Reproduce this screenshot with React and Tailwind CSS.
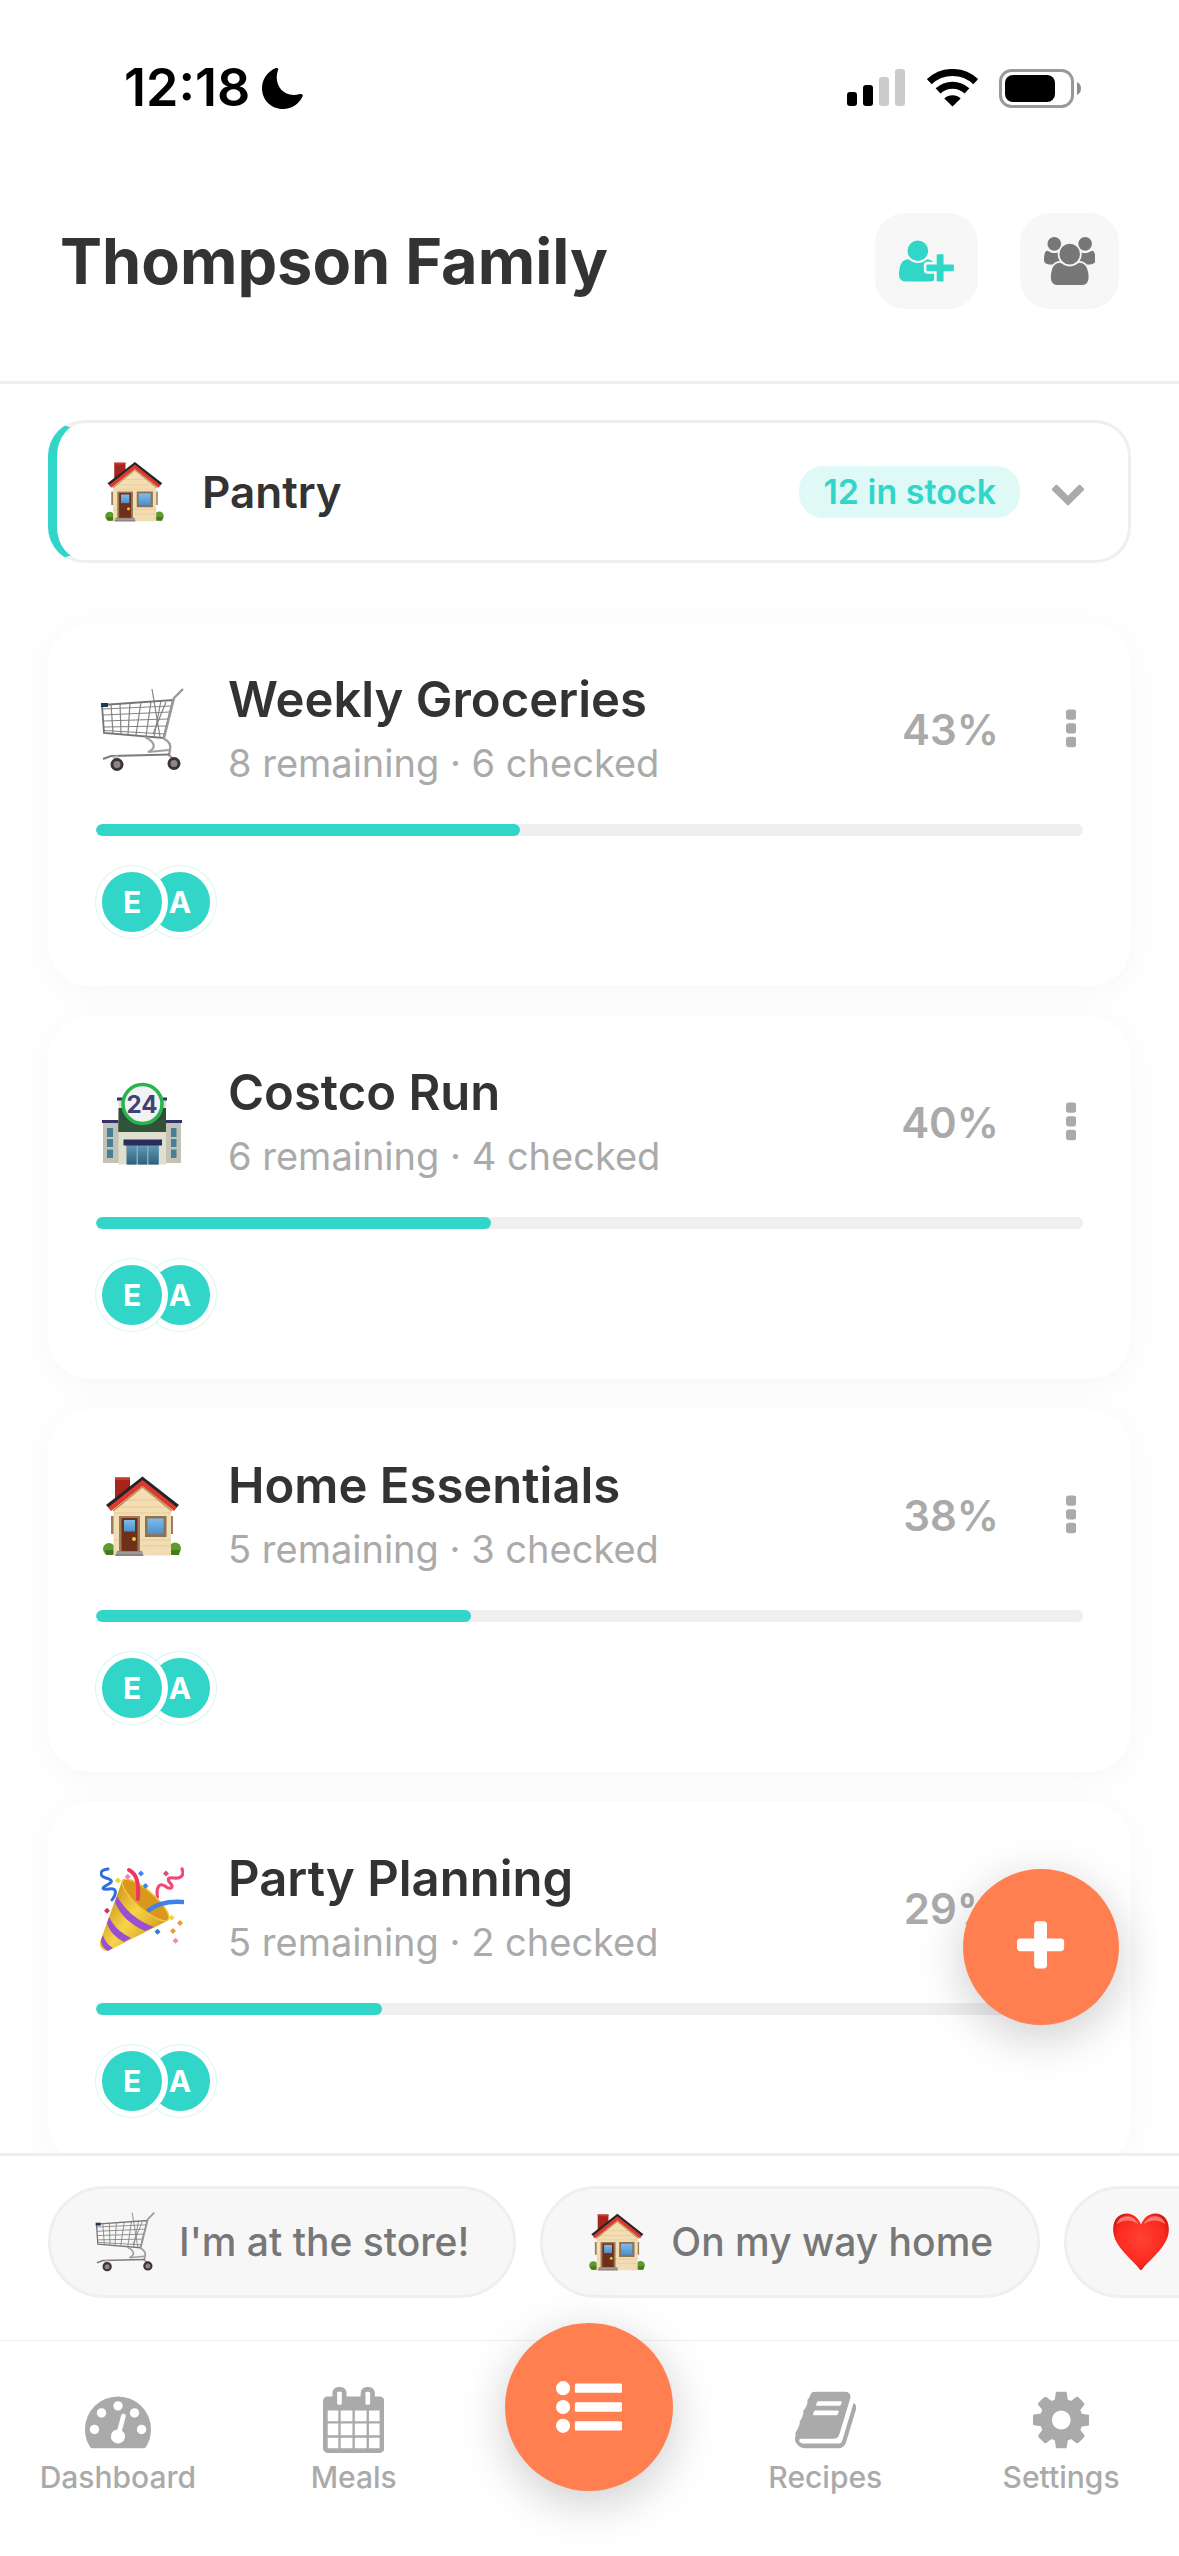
import React from "react";

const GLYPHS = {
  userPlus: {
    width: 2048,
    d: "M704 640q-159 0 -271.5 112.5t-112.5 271.5t112.5 271.5t271.5 112.5t271.5 -112.5t112.5 -271.5t-112.5 -271.5t-271.5 -112.5zM1664 512h352q13 0 22.5 -9.5t9.5 -22.5v-192q0 -13 -9.5 -22.5t-22.5 -9.5h-352v-352q0 -13 -9.5 -22.5t-22.5 -9.5h-192q-13 0 -22.5 9.5t-9.5 22.5v352h-352q-13 0 -22.5 9.5t-9.5 22.5v192q0 13 9.5 22.5t22.5 9.5h352v352q0 13 9.5 22.5t22.5 9.5h192q13 0 22.5 -9.5t9.5 -22.5v-352zM928 288q0 -52 38 -90t90 -38h256v-238q-68 -50 -171 -50h-874q-121 0 -194 69t-73 190q0 53 3.5 103.5t14 109t26.5 108.5t43 97.5t62 81t85.5 53.5t111.5 20q19 0 39 -17q79 -61 154.5 -91.5t164.5 -30.5t164.5 30.5t154.5 91.5q20 17 39 17q132 0 217 -96h-223q-52 0 -90 -38t-38 -90v-192z",
  },
  users: {
    width: 1920,
    d: "M593 640q-162 -5 -265 -128h-134q-82 0 -138 40.5t-56 118.5q0 353 124 353q6 0 43.5 -21t97.5 -42.5t119 -21.5q67 0 133 23q-5 -37 -5 -66q0 -139 81 -256zM1664 3q0 -120 -73 -189.5t-194 -69.5h-874q-121 0 -194 69.5t-73 189.5q0 53 3.5 103.5t14 109t26.5 108.5t43 97.5t62 81t85.5 53.5t111.5 20q10 0 43 -21.5t73 -48t107 -48t135 -21.5t135 21.5t107 48t73 48t43 21.5q61 0 111.5 -20t85.5 -53.5t62 -81t43 -97.5t26.5 -108.5t14 -109t3.5 -103.5zM640 1280q0 -106 -75 -181t-181 -75t-181 75t-75 181t75 181t181 75t181 -75t75 -181zM1344 896q0 -159 -112.5 -271.5t-271.5 -112.5t-271.5 112.5t-112.5 271.5t112.5 271.5t271.5 112.5t271.5 -112.5t112.5 -271.5zM1920 671q0 -78 -56 -118.5t-138 -40.5h-134q-103 123 -265 128q81 117 81 256q0 29 -5 66q66 -23 133 -23q59 0 119 21.5t97.5 42.5t43.5 21q124 0 124 -353zM1792 1280q0 -106 -75 -181t-181 -75t-181 75t-75 181t75 181t181 75t181 -75t75 -181z",
  },
  dashboard: {
    width: 1792,
    d: "M384 384q0 53 -37.5 90.5t-90.5 37.5t-90.5 -37.5t-37.5 -90.5t37.5 -90.5t90.5 -37.5t90.5 37.5t37.5 90.5zM576 832q0 53 -37.5 90.5t-90.5 37.5t-90.5 -37.5t-37.5 -90.5t37.5 -90.5t90.5 -37.5t90.5 37.5t37.5 90.5zM1004 351l101 382q6 26 -7.5 48.5t-38.5 29.5t-48 -6.5t-30 -39.5l-101 -382q-60 -5 -107 -43.5t-63 -98.5q-20 -77 20 -146t117 -89t146 20t89 117q16 60 -6 117t-72 91zM1664 384q0 53 -37.5 90.5t-90.5 37.5t-90.5 -37.5t-37.5 -90.5t37.5 -90.5t90.5 -37.5t90.5 37.5t37.5 90.5zM1024 1024q0 53 -37.5 90.5t-90.5 37.5t-90.5 -37.5t-37.5 -90.5t37.5 -90.5t90.5 -37.5t90.5 37.5t37.5 90.5zM1472 832q0 53 -37.5 90.5t-90.5 37.5t-90.5 -37.5t-37.5 -90.5t37.5 -90.5t90.5 -37.5t90.5 37.5t37.5 90.5zM1792 384q0 -261 -141 -483q-19 -29 -54 -29h-1402q-35 0 -54 29q-141 221 -141 483q0 182 71 348t191 286t286 191t348 71t348 -71t286 -191t191 -286t71 -348z",
  },
  calendar: {
    width: 1664,
    d: "M128 -128h288v288h-288v-288zM480 -128h320v288h-320v-288zM128 224h288v320h-288v-320zM480 224h320v320h-320v-320zM128 608h288v288h-288v-288zM864 -128h320v288h-320v-288zM480 608h320v288h-320v-288zM1248 -128h288v288h-288v-288zM864 224h320v320h-320v-320zM512 1088v288q0 13 -9.5 22.5t-22.5 9.5h-64q-13 0 -22.5 -9.5t-9.5 -22.5v-288q0 -13 9.5 -22.5t22.5 -9.5h64q13 0 22.5 9.5t9.5 22.5zM1248 224h288v320h-288v-320zM864 608h320v288h-320v-288zM1248 608h288v288h-288v-288zM1280 1088v288q0 13 -9.5 22.5t-22.5 9.5h-64q-13 0 -22.5 -9.5t-9.5 -22.5v-288q0 -13 9.5 -22.5t22.5 -9.5h64q13 0 22.5 9.5t9.5 22.5zM1664 1152v-1280q0 -52 -38 -90t-90 -38h-1408q-52 0 -90 38t-38 90v1280q0 52 38 90t90 38h128v96q0 66 47 113t113 47h64q66 0 113 -47t47 -113v-96h384v96q0 66 47 113t113 47h64q66 0 113 -47t47 -113v-96h128q52 0 90 -38t38 -90z",
  },
  list: {
    width: 1792,
    d: "M384 128q0 -80 -56 -136t-136 -56t-136 56t-56 136t56 136t136 56t136 -56t56 -136zM384 640q0 -80 -56 -136t-136 -56t-136 56t-56 136t56 136t136 56t136 -56t56 -136zM1792 224v-192q0 -13 -9.5 -22.5t-22.5 -9.5h-1216q-13 0 -22.5 9.5t-9.5 22.5v192q0 13 9.5 22.5t22.5 9.5h1216q13 0 22.5 -9.5t9.5 -22.5zM384 1152q0 -80 -56 -136t-136 -56t-136 56t-56 136t56 136t136 56t136 -56t56 -136zM1792 736v-192q0 -13 -9.5 -22.5t-22.5 -9.5h-1216q-13 0 -22.5 9.5t-9.5 22.5v192q0 13 9.5 22.5t22.5 9.5h1216q13 0 22.5 -9.5t9.5 -22.5zM1792 1248v-192q0 -13 -9.5 -22.5t-22.5 -9.5h-1216q-13 0 -22.5 9.5t-9.5 22.5v192q0 13 9.5 22.5t22.5 9.5h1216q13 0 22.5 -9.5t9.5 -22.5z",
  },
  book: {
    width: 1664,
    d: "M1639 1058q40 -57 18 -129l-275 -906q-19 -64 -76.5 -107.5t-122.5 -43.5h-923q-77 0 -148.5 53.5t-99.5 131.5q-24 67 -2 127q0 4 3 27t4 37q1 8 -3 21.5t-3 19.5q2 11 8 21t16.5 23.5t16.5 23.5q23 38 45 91.5t30 91.5q3 10 0.5 30t-0.5 28q3 11 17 28t17 23q21 36 42 92t25 90q1 9 -2.5 32t0.5 28q4 13 22 30.5t22 22.5q19 26 42.5 84.5t27.5 96.5q1 8 -3 25.5t-2 26.5q2 8 9 18t18 23t17 21q8 12 16.5 30.5t15 35t16 36t19.5 32t26.5 23.5t36 11.5t47.5 -5.5l-1 -3q38 9 51 9h761q74 0 114 -56t18 -130l-274 -906q-36 -119 -71.5 -153.5t-128.5 -34.5h-869q-27 0 -38 -15q-11 -16 -1 -43q24 -70 144 -70h923q29 0 56 15.5t35 41.5l300 987q7 22 5 57q38 -15 59 -43zM575 1056q-4 -13 2 -22.5t20 -9.5h608q13 0 25.5 9.5t16.5 22.5l21 64q4 13 -2 22.5t-20 9.5h-608q-13 0 -25.5 -9.5t-16.5 -22.5zM492 800q-4 -13 2 -22.5t20 -9.5h608q13 0 25.5 9.5t16.5 22.5l21 64q4 13 -2 22.5t-20 9.5h-608q-13 0 -25.5 -9.5t-16.5 -22.5z",
  },
  cog: {
    width: 1536,
    d: "M1024 640q0 106 -75 181t-181 75t-181 -75t-75 -181t75 -181t181 -75t181 75t75 181zM1536 749v-222q0 -12 -8 -23t-20 -13l-185 -28q-19 -54 -39 -91q35 -50 107 -138q10 -12 10 -25t-9 -23q-27 -37 -99 -108t-94 -71q-12 0 -26 9l-138 108q-44 -23 -91 -38q-16 -136 -29 -186q-7 -28 -36 -28h-222q-14 0 -24.5 8.5t-11.5 21.5l-28 184q-49 16 -90 37l-141 -107q-10 -9 -25 -9q-14 0 -25 11q-126 114 -165 168q-7 10 -7 23q0 12 8 23q15 21 51 66.5t54 70.5q-27 50 -41 99l-183 27q-13 2 -21 12.5t-8 23.5v222q0 12 8 23t19 13l186 28q14 46 39 92q-40 57 -107 138q-10 12 -10 24q0 10 9 23q26 36 98.5 107.5t94.5 71.5q13 0 26 -10l138 -107q44 23 91 38q16 136 29 186q7 28 36 28h222q14 0 24.5 -8.5t11.5 -21.5l28 -184q49 -16 90 -37l142 107q9 9 24 9q13 0 25 -10q129 -119 165 -170q7 -8 7 -22q0 -12 -8 -23q-15 -21 -51 -66.5t-54 -70.5q26 -50 41 -98l183 -28q13 -2 21 -12.5t8 -23.5z",
  },
  plus: {
    width: 1408,
    d: "M1408 800v-192q0 -40 -28 -68t-68 -28h-416v-416q0 -40 -28 -68t-68 -28h-192q-40 0 -68 28t-28 68v416h-416q-40 0 -68 28t-28 68v192q0 40 28 68t68 28h416v416q0 40 28 68t68 28h192q40 0 68 -28t28 -68v-416h416q40 0 68 -28t28 -68z",
  },
  dots: {
    width: 384,
    d: "M384 288v-192q0 -40 -28 -68t-68 -28h-192q-40 0 -68 28t-28 68v192q0 40 28 68t68 28h192q40 0 68 -28t28 -68zM384 800v-192q0 -40 -28 -68t-68 -28h-192q-40 0 -68 28t-28 68v192q0 40 28 68t68 28h192q40 0 68 -28t28 -68zM384 1312v-192q0 -40 -28 -68t-68 -28h-192q-40 0 -68 28t-28 68v192q0 40 28 68t68 28h192q40 0 68 -28t28 -68z",
  },
  chevronDown: {
    width: 1792,
    d: "M1683 728l-742 -741q-19 -19 -45 -19t-45 19l-742 741q-19 19 -19 45.5t19 45.5l166 165q19 19 45 19t45 -19l531 -531l531 531q19 19 45 19t45 -19l166 -165q19 -19 19 -45.5t-19 -45.5z",
  },
};

// glyph paths are in font units with the y axis pointing up
const Icon = ({ name, className }) => (
  <svg viewBox={`0 0 ${GLYPHS[name].width} 1792`} className={className} fill="currentColor" aria-hidden="true">
    <path transform="translate(0 1536) scale(1 -1)" fillRule="evenodd" d={GLYPHS[name].d} />
  </svg>
);

const CartEmoji = ({ className }) => (
  <svg viewBox="0 0 84 84" className={className} fill="none" aria-hidden="true">
    <g stroke="#858282" strokeWidth="1.200">
      <path d="M2 21L71 18M3 27L70 24M3 33L68 31M4 39L66 38M4 42.500L65 46" />
      <path d="M11 16L13 45M20 15.500L21 46M30 15L28 46M41 14L36 47M51 13.500L46 48M61 12.500L54 49" />
      <path d="M52 1L60 49M66 14L53 46" />
    </g>
    <path d="M2 17L73 12L63.500 50L4 45Z" stroke="#777474" strokeWidth="1.800" />
    <path d="M83 1L74 10L64 50" stroke="#9b9898" strokeWidth="2.400" />
    <path d="M63 50C70 54 71 57 70 62L69 67L75 73" stroke="#a19e9e" strokeWidth="2.400" />
    <path d="M45 49C55 54 57 60 48 64L69 62" stroke="#a19e9e" strokeWidth="2.200" />
    <path d="M3 71L11 68L70 66.500" stroke="#7d7a7a" strokeWidth="2.200" />
    <path d="M15 68L17 75" stroke="#c4c0c0" strokeWidth="5" />
    <circle cx="17" cy="76.500" r="5" fill="#8f8585" stroke="#3b3434" strokeWidth="3" />
    <circle cx="74" cy="75.500" r="5" fill="#8f8585" stroke="#3b3434" strokeWidth="3" />
    <rect x="1" y="15" width="7" height="4" fill="#1d3a55" />
  </svg>
);

const HouseEmoji = ({ className }) => (
  <svg viewBox="0 0 84 84" className={className} aria-hidden="true">
    <defs>
      <linearGradient id="house-wall" x1="0" y1="0" x2="1" y2="1">
        <stop offset="0" stopColor="#f6deb0" />
        <stop offset="1" stopColor="#f0dcb4" />
      </linearGradient>
      <linearGradient id="house-glass" x1="0" y1="0" x2="0" y2="1">
        <stop offset="0" stopColor="#7fbce8" />
        <stop offset="1" stopColor="#4c8fd0" />
      </linearGradient>
    </defs>
    <path d="M15 3.500H30V20L15 30Z" fill="#a5241c" />
    <path d="M15 3.500H30V6H15Z" fill="#c9392d" />
    <circle cx="9" cy="75" r="6" fill="#5f9a2c" />
    <circle cx="75" cy="74.500" r="6" fill="#5f9a2c" />
    <path d="M5 76H15V81H6ZM70 76H80L79 81H70Z" fill="#47791f" />
    <path d="M11 42H14V60H11ZM70 42H73V60H70Z" fill="#9b7d60" />
    <path d="M13.500 32L42.500 9L71 32V81.500H13.500Z" fill="url(#house-wall)" />
    <path d="M24 26H60M16 33H69M14 39H71M14 66H71M42 72H71" stroke="#e3cb9a" strokeWidth="1" />
    <path d="M6 31L42.500 2.500L79 31L76 34L42.500 8L9 34Z" fill="#22262a" />
    <path d="M8 33.500L42.500 6L77 33.500L74 37L42.500 12L11 37Z" fill="#db3a2c" />
    <path d="M13 37L42.500 13L72 37" stroke="#b98d62" strokeWidth="1.500" fill="none" />
    <rect x="19" y="42" width="21" height="36" fill="#9a7c5c" />
    <rect x="21.500" y="44" width="16" height="34" fill="#6f3019" />
    <rect x="24" y="46" width="11" height="11.500" fill="url(#house-glass)" />
    <circle cx="34" cy="65" r="2" fill="#f5c33b" />
    <rect x="45" y="42" width="21.500" height="21" fill="#8d7254" />
    <rect x="47.500" y="44.500" width="16" height="15.500" fill="url(#house-glass)" />
    <path d="M17 77H42L43.500 82H15Z" fill="#8d8581" />
    <path d="M16 79H43" stroke="#b5adaa" strokeWidth="1" />
  </svg>
);

const StoreEmoji = ({ className }) => (
  <svg viewBox="0 0 84 84" className={className} aria-hidden="true">
    <defs>
      <linearGradient id="store-glass" x1="0" y1="0" x2="0" y2="1">
        <stop offset="0" stopColor="#5d9cb8" />
        <stop offset="1" stopColor="#2f5f7c" />
      </linearGradient>
    </defs>
    <rect x="3" y="40" width="16" height="42" fill="#c3c2b4" />
    <rect x="65" y="40" width="16" height="42" fill="#c3c2b4" />
    <path d="M2 39H18V42H2ZM66 39H82V42H66Z" fill="#34326b" />
    <rect x="18.500" y="17" width="47.500" height="66.500" fill="#dfdfcf" />
    <rect x="17" y="16.500" width="50" height="3" fill="#34326b" />
    <rect x="18.500" y="27" width="47.500" height="24" fill="#2e4d3a" />
    <rect x="18.500" y="39" width="47.500" height="12" fill="#33523b" />
    <path d="M7 47H13V56H7ZM7 58H13V66H7ZM7 68.500H13V77H7ZM71 47H76.500V56H71ZM71 58H76.500V66H71ZM71 68.500H76.500V77H71Z" fill="#44809c" />
    <rect x="26" y="64" width="33" height="19.500" fill="#8fa9ae" />
    <path d="M27 64H36.500V83.500H27ZM38 64H47V83.500H38ZM48.500 64H58.500V83.500H48.500Z" fill="url(#store-glass)" />
    <rect x="23.500" y="58.500" width="38.500" height="6" fill="#2d2b5e" />
    <circle cx="42.500" cy="23" r="19.500" fill="#f3f2f2" stroke="#27b44c" strokeWidth="3.500" />
    <text x="42" y="32" textAnchor="middle" fontFamily="Inter, sans-serif" fontWeight="700" fontSize="24" fill="#3e4275">24</text>
  </svg>
);

const CONFETTI = [
  [18, 13.5, "#e8d92c"],
  [27.7, 9.7, "#f284b0"],
  [41, 6.5, "#3f86ec"],
  [45.5, 19, "#3f86ec"],
  [66, 6.5, "#e24a72"],
  [7, 43.7, "#cf3355"],
  [71.5, 50.7, "#efd53b"],
  [80, 56, "#f09a35"],
  [73, 64, "#f09a35"],
  [57.5, 64.7, "#3a74da"],
  [75.5, 73.7, "#f38ab6"],
];

const PartyEmoji = ({ className }) => (
  <svg viewBox="0 0 84 84" className={className} fill="none" strokeLinecap="round" aria-hidden="true">
    <defs>
      <linearGradient id="party-cone" x1="0" y1="0.300" x2="0.800" y2="0.900">
        <stop offset="0" stopColor="#c98a14" />
        <stop offset="0.500" stopColor="#f6d548" />
        <stop offset="1" stopColor="#d39a1c" />
      </linearGradient>
    </defs>
    <path d="M8 2C-1 3 -1 9 6 11C13 13 13 15 7 18C1 21 2 23 9 22C17 21 17 26 12 33" stroke="#2f6fe0" strokeWidth="3" />
    <path d="M82 2C85 9 80 12 74 11C67 10 67 13 71 17C74 21 70 23 65 19C59 15 56 21 57.500 30" stroke="#ef4a78" strokeWidth="3.200" />
    <path d="M22.500 13L0 75C-1 81 4 86 10 83L67 54Z" fill="url(#party-cone)" />
    <path d="M17 29C24 42 37 54 54 60L45 64C31 58 20 48 15 35Z" fill="#9a4fd0" />
    <path d="M9 50C14 60 21 66 31 71L24 75C16 71 9 64 7 56Z" fill="#9a4fd0" />
    <path d="M3 68C5 74 8 78 13 81L8 84C4 82 1 78 1 73Z" fill="#9a4fd0" />
    <ellipse cx="45.500" cy="33" rx="30" ry="9" transform="rotate(41 45.500 33)" fill="#d9981c" stroke="#efc63d" strokeWidth="1.500" />
    <path d="M29 3C37 7 39 16 38 32" stroke="#ee3560" strokeWidth="4" />
    <path d="M49 43C58 36 69 34 83 35" stroke="#3f80ea" strokeWidth="4.500" />
    {CONFETTI.map(([x, y, color]) => (
      <path key={`${x}-${y}`} d={`M${x - 3} ${y}L${x} ${y - 3}L${x + 3} ${y}L${x} ${y + 3}Z`} fill={color} />
    ))}
  </svg>
);

const HeartEmoji = ({ className }) => (
  <svg viewBox="0 0 84 84" className={className} aria-hidden="true">
    <defs>
      <radialGradient id="heart-fill" cx="0.500" cy="0.450" r="0.650">
        <stop offset="0" stopColor="#ff4234" />
        <stop offset="0.650" stopColor="#fb2a1e" />
        <stop offset="1" stopColor="#b80d08" />
      </radialGradient>
    </defs>
    <path d="M42 82C29 65 3 48 3 24C3 9 12 2 22 2C32 2 39 9 42 18C45 9 52 2 62 2C72 2 81 9 81 24C81 48 55 65 42 82Z" fill="url(#heart-fill)" />
    <path d="M8 17C10 9 17 5 24 6C31 7 35 11 38 17C28 10 18 10 8 17ZM76 17C74 9 67 5 60 6C53 7 49 11 46 17C56 10 66 10 76 17Z" fill="#ff9d94" opacity="0.700" />
  </svg>
);

const lists = [
  { name: "Weekly Groceries", remaining: 8, checked: 6, percent: 43, Emoji: CartEmoji },
  { name: "Costco Run", remaining: 6, checked: 4, percent: 40, Emoji: StoreEmoji },
  { name: "Home Essentials", remaining: 5, checked: 3, percent: 38, Emoji: HouseEmoji },
  { name: "Party Planning", remaining: 5, checked: 2, percent: 29, Emoji: PartyEmoji },
];

const StatusBar = () => (
  <div className="flex h-[177px] shrink-0 items-start justify-between pt-[58px] pr-[98px] pl-[124px]">
    <div className="flex items-center gap-3 text-[52px] leading-[60px] font-semibold text-black">
      <span>12:18</span>
      <svg viewBox="0 0 41 41" className="h-[41px] w-[41px]" aria-hidden="true">
        <path d="M14 0C15 -0.500 17 0.500 16 2C11 16 21 31 38 26C40 25.500 41.500 27 40.500 28.500C37 36 30 41 21 41C9 41 0 32 0 20C0 11 6 3 14 0Z" />
      </svg>
    </div>
    <div className="flex h-[60px] items-center gap-[21px]">
      <svg viewBox="0 0 59 38" className="h-[38px] w-[59px]" aria-hidden="true">
        <rect x="0" y="23" width="10" height="14" rx="3" />
        <rect x="16" y="16" width="10" height="21" rx="3" />
        <rect x="32" y="8" width="10" height="29" rx="3" fill="#cbcbcb" />
        <rect x="48" y="0" width="10" height="37" rx="3" fill="#cbcbcb" />
      </svg>
      <svg viewBox="0 0 51 38" className="h-[38px] w-[51px]" fill="none" stroke="#000" strokeWidth="7" aria-hidden="true">
        <path d="M2.300 12.600A34 34 0 0 1 48.700 12.600" />
        <path d="M11 21.900A21.300 21.300 0 0 1 40 21.900" />
        <path d="M25.500 37.500L17.300 29.500A12 12 0 0 1 33.700 29.500Z" fill="#000" stroke="none" />
      </svg>
      <svg viewBox="0 0 82 39" className="h-[39px] w-[82px]" aria-hidden="true">
        <rect x="1.500" y="1.500" width="72" height="36" rx="11" fill="none" stroke="#999" strokeWidth="3" />
        <rect x="6" y="6" width="50" height="27" rx="8" />
        <path d="M78 13Q82 15 82 19.500T78 26Z" fill="#8c8c8c" />
      </svg>
    </div>
  </div>
);

const Avatar = ({ letter, className }) => (
  <span
    className={`flex h-[72px] w-[72px] items-center justify-center rounded-full border-6 border-white bg-[#31d6c9] text-[30px] leading-9 font-bold text-white shadow-[0_0_0_1px_rgba(49,214,201,0.2)] ${className}`}
  >
    {letter}
  </span>
);

const ListCard = ({ list }) => {
  const { name, remaining, checked, percent, Emoji } = list;

  return (
    <article className="rounded-[42px] bg-white p-12 shadow-[0_6px_36px_rgba(0,0,0,0.04)]">
      <div className="flex h-[117px] items-center">
        <div className="flex w-[92px] shrink-0 justify-center">
          <Emoji className="h-[84px] w-[84px]" />
        </div>
        <div className="ml-10 flex flex-1 flex-col gap-2">
          <h2 className="text-[49px] leading-[60px] font-semibold text-[#333]">{name}</h2>
          <p className="text-[38px] leading-[51px] text-[#aaa]">
            {remaining} remaining · {checked} checked
          </p>
        </div>
        <span className="text-[42px] leading-[51px] font-semibold text-[#aaa]">{percent}%</span>
        <button type="button" aria-label={`${name} options`} className="ml-[60px] flex w-6 justify-center text-[#aaa]">
          <Icon name="dots" className="h-12" />
        </button>
      </div>
      <div
        role="progressbar"
        aria-label={`${name} progress`}
        aria-valuenow={percent}
        className="mt-9 h-3 overflow-hidden rounded-full bg-[#efefef]"
      >
        <div className="h-full rounded-full bg-[#31d6c9]" style={{ width: `${percent}%` }} />
      </div>
      <div className="mt-[30px] flex">
        <Avatar letter="E" className="relative z-1" />
        <Avatar letter="A" className="-ml-6" />
      </div>
    </article>
  );
};

const Chip = ({ label, Emoji }) => (
  <button
    type="button"
    className="flex h-28 shrink-0 items-center gap-6 rounded-full border-3 border-[#efefef] bg-[#f7f7f7] px-11 text-[39px] leading-[48px] font-medium text-[#777]"
  >
    <Emoji className="h-[60px] w-[60px]" />
    {label}
  </button>
);

const Tab = ({ icon, label }) => (
  <a href="#" className="flex flex-col items-center gap-[6px] text-[30px] leading-9 font-medium text-[#aaa]">
    <Icon name={icon} className="h-[66px]" />
    {label}
  </a>
);

const App = () => {
  return (
    <div className="flex h-screen flex-col overflow-hidden bg-white font-['Inter',sans-serif]">
      <StatusBar />

      {/* Header */}
      <header className="flex shrink-0 items-center justify-between border-b-3 border-[#efefef] px-[60px] pt-9 pb-[72px]">
        <h1 className="text-[63px] leading-[80px] font-bold text-[#333]">Thompson Family</h1>
        <div className="flex gap-[42px]">
          <button type="button" aria-label="Invite member" className="rounded-[30px] bg-[#f7f7f7] p-6 text-[#31d6c9]">
            <Icon name="userPlus" className="h-12" />
          </button>
          <button type="button" aria-label="Members" className="rounded-[30px] bg-[#f7f7f7] p-6 text-[#777]">
            <Icon name="users" className="h-12" />
          </button>
        </div>
      </header>

      {/* Lists */}
      <div className="relative min-h-0 flex-1">
        <main className="h-full overflow-hidden px-12 pt-9">
          <button
            type="button"
            className="mb-[60px] flex h-[143px] w-full items-center rounded-[36px] border-3 border-l-9 border-[#efefef] border-l-[#31d6c9] bg-white px-[42px] text-left"
          >
            <HouseEmoji className="ml-1 h-[63px] w-[63px]" />
            <span className="ml-9 flex-1 text-[44px] leading-[54px] font-semibold text-[#333]">Pantry</span>
            <span className="rounded-3xl bg-[#dff9f6] px-6 py-[6px] text-[34px] leading-10 font-semibold text-[#31d6c9]">
              12 in stock
            </span>
            <Icon name="chevronDown" className="ml-[30px] h-9 text-[#aaa]" />
          </button>
          <div className="flex flex-col gap-[30px]">
            {lists.map((list) => (
              <ListCard key={list.name} list={list} />
            ))}
          </div>
        </main>
        <button
          type="button"
          aria-label="New list"
          className="absolute right-[60px] bottom-32 z-2 flex h-[156px] w-[156px] items-center justify-center rounded-full bg-[#ff7f50] text-white shadow-[0_12px_48px_rgba(0,0,0,0.2)]"
        >
          <Icon name="plus" className="h-[60px]" />
        </button>
      </div>

      {/* Quick messages */}
      <div className="flex shrink-0 gap-6 overflow-hidden border-t-3 border-[#efefef] bg-white pt-[30px] pb-[42px] pl-12">
        <Chip label="I'm at the store!" Emoji={CartEmoji} />
        <Chip label="On my way home" Emoji={HouseEmoji} />
        <button
          type="button"
          aria-label="Send love"
          className="flex h-28 w-[300px] shrink-0 items-center rounded-full border-3 border-[#efefef] bg-[#f7f7f7] px-11"
        >
          <HeartEmoji className="h-[60px] w-[60px]" />
        </button>
      </div>

      {/* Tab bar */}
      <nav className="relative z-10 grid h-[216px] shrink-0 grid-cols-5 items-start border-t border-[#efefef] bg-white pt-[46px]">
        <Tab icon="dashboard" label="Dashboard" />
        <Tab icon="calendar" label="Meals" />
        <a
          href="#"
          aria-label="Lists"
          className="-mt-16 flex h-[168px] w-[168px] items-center justify-center justify-self-center rounded-full bg-[#ff7f50] text-white shadow-[0_12px_48px_rgba(0,0,0,0.2)]"
        >
          <Icon name="list" className="h-[66px]" />
        </a>
        <Tab icon="book" label="Recipes" />
        <Tab icon="cog" label="Settings" />
      </nav>
    </div>
  );
};

export default App;
